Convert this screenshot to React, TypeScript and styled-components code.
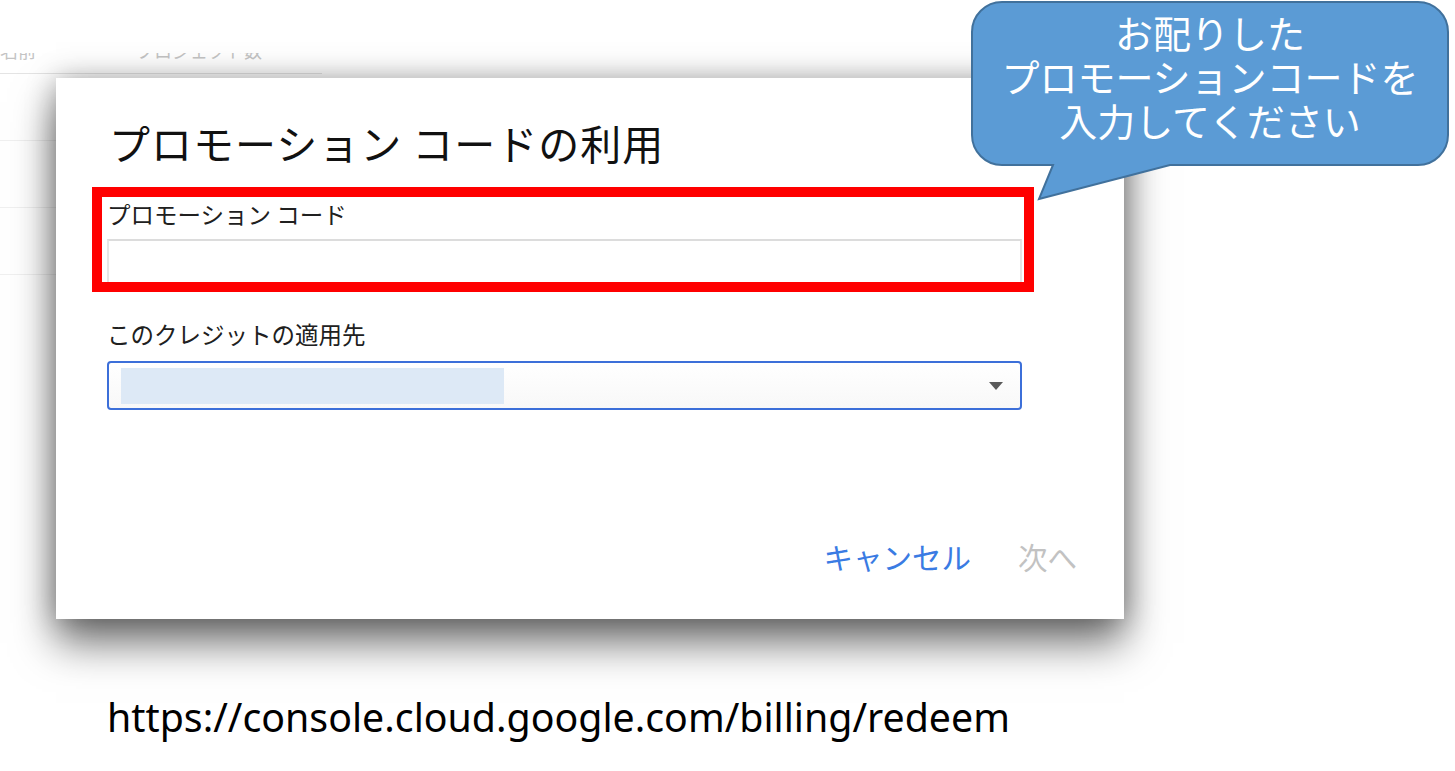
import React from 'react';
import styled, { createGlobalStyle } from 'styled-components';

const GlobalStyle = createGlobalStyle`
  html, body {
    margin: 0;
    padding: 0;
    background: #ffffff;
    overflow: hidden;
  }
  * {
    box-sizing: border-box;
  }
`;

const JP = `"Noto Sans CJK JP", "Noto Sans", sans-serif`;

const Slide = styled.div`
  position: relative;
  width: 1455px;
  height: 771px;
  background: #ffffff;
  overflow: hidden;
  font-family: ${JP};
`;

/* faded console page behind the dialog */
const Backdrop = styled.div`
  position: absolute;
  left: 0;
  top: 53px;
  width: 1150px;
  display: flex;
  flex-direction: column;
`;

const HeaderRow = styled.div`
  height: 21px;
  width: 322px;
  overflow: hidden;
  border-bottom: 1px solid #e4e4e4;
  display: flex;
  gap: 100px;
  color: #c4c4c4;
  font-size: 18px;
  line-height: 18px;
  white-space: nowrap;
`;

const HeaderText = styled.span`
  margin-top: -12px;
`;

const FaintRow = styled.div`
  height: 67px;
  width: 120px;
  border-bottom: 1px solid #f0f0f0;
`;

const Dialog = styled.div`
  position: absolute;
  left: 56px;
  top: 78px;
  width: 1068px;
  height: 541px;
  background: #ffffff;
  box-shadow: 0 24px 40px rgba(0, 0, 0, 0.55), 0 0 28px rgba(0, 0, 0, 0.28);
  display: flex;
  flex-direction: column;
  padding: 40px 102px 45px 51px;
`;

const Title = styled.h2`
  margin: 0 0 34px 2px;
  font-size: 41px;
  line-height: 48px;
  font-weight: 400;
  color: #111111;
  letter-spacing: 1px;
  white-space: nowrap;
`;

const Label = styled.div<{ $gap?: number }>`
  font-size: 23.5px;
  line-height: 28px;
  color: #202020;
  margin: 0 0 ${p => p.$gap ?? 11}px 0;
  white-space: nowrap;
`;

const TextInput = styled.div`
  height: 50px;
  width: 915px;
  border: 2px solid #dcdcdc;
  border-left-color: #e6e6e6;
  border-right-color: #e6e6e6;
  background: #ffffff;
  margin-bottom: 31px;
`;

const Select = styled.div`
  position: relative;
  height: 49px;
  width: 915px;
  border: 2px solid #3c6fd9;
  border-radius: 4px;
  background: linear-gradient(#ffffff, #f8f8f8);
  display: flex;
  align-items: center;
  padding-left: 12px;
`;

const Selected = styled.div`
  width: 383px;
  height: 36px;
  background: #dde9f6;
`;

const Caret = styled.span`
  position: absolute;
  right: 17px;
  top: 19px;
  width: 0;
  height: 0;
  border-left: 7px solid transparent;
  border-right: 7px solid transparent;
  border-top: 8px solid #5a5a5a;
`;

const Footer = styled.div`
  margin-top: auto;
  display: flex;
  justify-content: flex-end;
  align-items: center;
  gap: 47px;
  margin-right: -55px;
`;

const FlatButton = styled.button<{ $disabled?: boolean }>`
  border: none;
  background: none;
  padding: 0;
  font-family: ${JP};
  font-size: 29.5px;
  line-height: 36px;
  font-weight: 400;
  color: ${p => (p.$disabled ? '#c2c2c2' : '#3a7be3')};
  cursor: ${p => (p.$disabled ? 'default' : 'pointer')};
`;

const Highlight = styled.div`
  position: absolute;
  left: 92px;
  top: 187px;
  width: 942px;
  height: 105px;
  border: 10px solid #ff0000;
`;

const CalloutShape = styled.svg`
  position: absolute;
  left: 970px;
  top: 0;
`;

const CalloutText = styled.div`
  position: absolute;
  left: 972px;
  top: 0;
  width: 476px;
  height: 152px;
  display: flex;
  flex-direction: column;
  align-items: center;
  justify-content: center;
  color: #ffffff;
  font-size: 38px;
  line-height: 44px;
  text-align: center;
  white-space: nowrap;
`;

const Url = styled.div`
  position: absolute;
  left: 107px;
  top: 690px;
  font-family: "Noto Sans", "Open Sans", sans-serif;
  font-size: 39.3px;
  line-height: 54px;
  color: #000000;
  white-space: nowrap;
`;

export default function App() {
  return (
    <Slide>
      <GlobalStyle />
      <Backdrop>
        <HeaderRow>
          <HeaderText>名前</HeaderText>
          <HeaderText>プロジェクト数</HeaderText>
        </HeaderRow>
        <FaintRow />
        <FaintRow />
        <FaintRow />
      </Backdrop>

      <Dialog>
        <Title>プロモーション コードの利用</Title>
        <Label>プロモーション コード</Label>
        <TextInput />
        <Label $gap={13}>このクレジットの適用先</Label>
        <Select>
          <Selected />
          <Caret />
        </Select>
        <Footer>
          <FlatButton>キャンセル</FlatButton>
          <FlatButton $disabled>次へ</FlatButton>
        </Footer>
      </Dialog>

      <Highlight />

      <CalloutShape width="482" height="204" viewBox="0 0 482 204">
        <path
          d="M 32 2 H 448 A 30 30 0 0 1 478 32 V 135 A 30 30 0 0 1 448 165 H 200 L 69 199 L 83 165 H 32 A 30 30 0 0 1 2 135 V 32 A 30 30 0 0 1 32 2 Z"
          fill="#5b9bd5"
          stroke="#41719c"
          strokeWidth="2"
        />
      </CalloutShape>
      <CalloutText>
        <span>お配りした</span>
        <span>プロモーションコードを</span>
        <span>入力してください</span>
      </CalloutText>

      <Url>https://console.cloud.google.com/billing/redeem</Url>
    </Slide>
  );
}
